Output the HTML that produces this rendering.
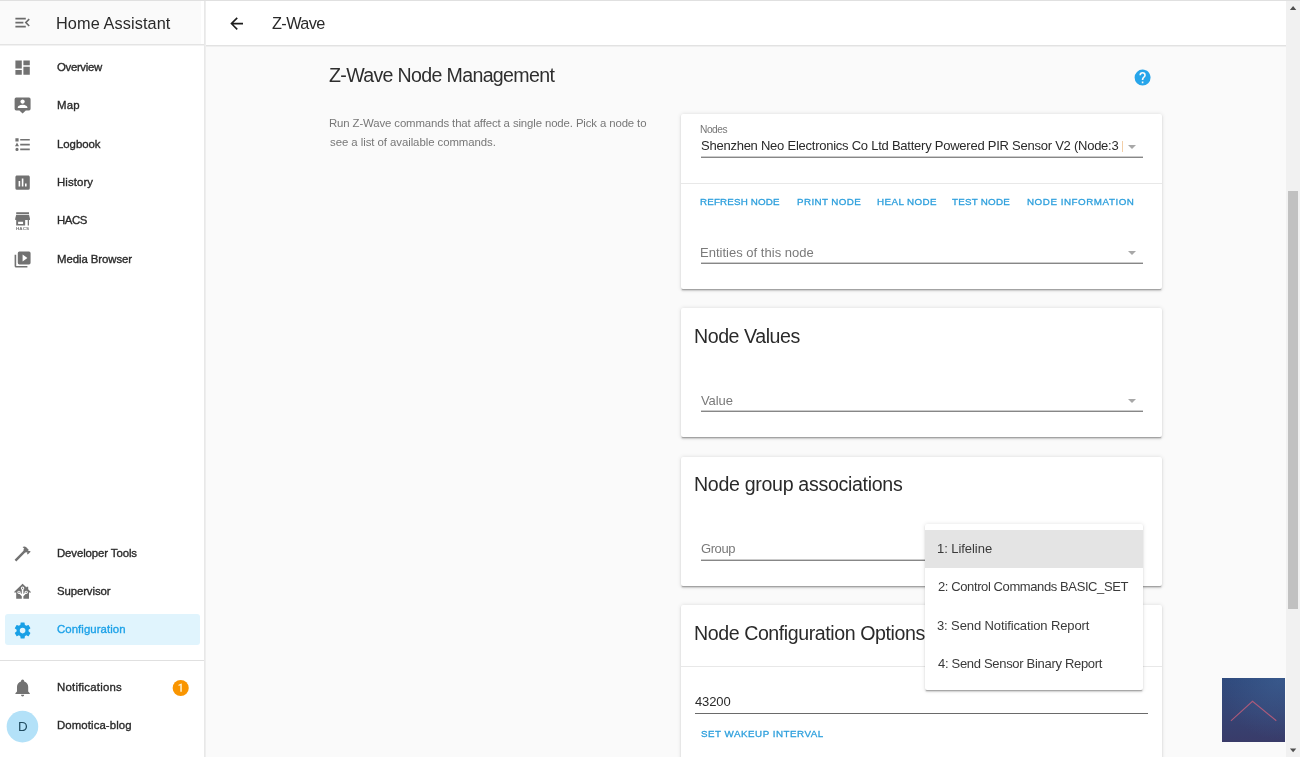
<!DOCTYPE html>
<html>
<head>
<meta charset="utf-8">
<title>Z-Wave</title>
<style>
*{box-sizing:border-box;margin:0;padding:0}
html,body{width:1300px;height:757px;overflow:hidden;background:#fafafa;font-family:"Liberation Sans",sans-serif;color:#212121}
.abs{position:absolute}
.t{position:absolute;white-space:nowrap;z-index:1;will-change:transform}
#topline{left:0;top:0;width:1300px;height:1px;background:#e0e0e0;z-index:50}
/* sidebar */
#sidebar{left:0;top:0;width:206px;height:757px;background:#fff;border-right:1px solid #eeeeee}
#sbline{left:204px;top:0;width:1px;height:757px;background:#e8e8e8}
#sbhead{left:0;top:0;width:201px;height:44px;background:#fafafa}
#sbheadline{left:0;top:44px;width:204px;height:2px;background:linear-gradient(#e4e4e4 50%,#f2f2f2 50%)}
#sbtitle{left:57px;top:13px;font-size:16px;line-height:20px;color:#212121;white-space:nowrap}
.ic{position:absolute;width:19.2px;height:19.2px;fill:#727272;will-change:transform}
.sbi{position:absolute;left:57.5px;font-size:11.2px;line-height:14px;color:#212121;white-space:nowrap;-webkit-text-stroke:0.3px #212121}
#sel{left:5px;top:614px;width:195px;height:31px;background:#e0f4fd;border-radius:3px}
#sbdiv{left:0;top:660px;width:204px;height:1px;background:#e0e0e0}
#badge{left:172px;top:679px;width:16px;height:16px;border-radius:50%;background:#ff9800;color:#fff;font-size:9px;line-height:16px;text-align:center;font-weight:bold}
#avatar{left:6.5px;top:709.5px;width:32px;height:32px;border-radius:50%;background:#b3e5fc;color:#212121;font-size:12.8px;line-height:32px;text-align:center}
/* top bar */
#topbar{left:205px;top:0;width:1081px;height:45px;background:#fff}
#topbarline{left:205px;top:45px;width:1081px;height:2px;background:linear-gradient(#e2e2e2 50%,#efefef 50%)}
#tbtitle{left:272px;top:13px;font-size:16px;line-height:20px;white-space:nowrap}
/* content */
#h1{left:330px;top:64px;font-size:19.2px;line-height:24px;white-space:nowrap;color:#212121}
#desc{left:330px;top:113.5px;font-size:11.2px;line-height:19.2px;color:#727272;white-space:nowrap}
.card{position:absolute;left:681px;width:481px;background:#fff;border-radius:2px;box-shadow:0 1.6px 1.6px 0 rgba(0,0,0,.14),0 0.8px 4px 0 rgba(0,0,0,.12),0 2.4px 0.8px -1.6px rgba(0,0,0,.2)}
.ch{position:absolute;left:695px;font-size:19.2px;line-height:24px;white-space:nowrap;color:#212121}
.lbl{position:absolute;left:701px;font-size:12.8px;line-height:16px;color:#737373;white-space:nowrap}
.ul{position:absolute;left:701px;width:442px;height:2px;background:linear-gradient(#cccccc 50%,#878787 50%)}
.dd{position:absolute;left:1128px;width:0;height:0;border-left:4px solid transparent;border-right:4px solid transparent;border-top:4px solid #a8a8a8}
.hr{position:absolute;left:681px;width:481px;height:1px;background:#e8e8e8}
.btn{position:absolute;font-size:9.6px;line-height:12px;color:#2b9fdb;letter-spacing:.9px;white-space:nowrap;-webkit-text-stroke:0.3px #2b9fdb}
/* dropdown */
#menu{left:925px;top:524px;width:218px;height:166px;background:#fff;border-radius:2px;box-shadow:0 1.6px 1.6px 0 rgba(0,0,0,.14),0 0.8px 4px 0 rgba(0,0,0,.12),0 2.4px 0.8px -1.6px rgba(0,0,0,.2);z-index:10}
#menusel{left:925px;top:530px;width:218px;height:38px;background:#e4e4e4;z-index:11}
.mi{position:absolute;left:938px;font-size:12.8px;line-height:16px;color:#3a3a3a;white-space:nowrap;z-index:12}
/* scrollbar */
#sbtrack{left:1286px;top:0;width:14px;height:757px;background:#f1f1f1}
#sbthumb{left:1288px;top:191px;width:10px;height:418px;background:#c1c1c1}
#bluebox{left:1222px;top:678px;width:63px;height:64px;background:radial-gradient(circle at 90% 5%,rgba(66,104,155,.45),rgba(66,104,155,0) 70%),linear-gradient(180deg,#2f4a7d 0%,#354575 50%,#393b69 100%);z-index:20}
</style>
</head>
<body>
<!-- main content -->
<div class="abs" id="topbar"></div>
<div class="abs" id="topbarline"></div>
<svg class="ic" style="left:227.1px;top:13.8px;fill:#1c1c1c" viewBox="0 0 24 24"><path d="M20,11V13H8L13.5,18.5L12.08,19.92L4.16,12L12.08,4.08L13.5,5.5L8,11H20Z"/></svg>

<svg class="ic" style="left:1132.6px;top:68.2px;fill:#27a5ea" viewBox="0 0 24 24"><path d="M15.07,11.25L14.17,12.17C13.45,12.89 13,13.5 13,15H11V14.5C11,13.39 11.45,12.39 12.17,11.67L13.41,10.41C13.78,10.05 14,9.55 14,9C14,7.89 13.1,7 12,7A2,2 0 0,0 10,9H8A4,4 0 0,1 12,5A4,4 0 0,1 16,9C16,9.88 15.64,10.67 15.07,11.25M13,19H11V17H13M12,2A10,10 0 0,0 2,12A10,10 0 0,0 12,22A10,10 0 0,0 22,12C22,6.47 17.5,2 12,2Z"/></svg>

<!-- card 1 -->
<div class="card" style="top:114px;height:175px"></div>
<div class="ul" style="top:156px"></div>
<div class="dd" style="top:145px"></div>
<div class="abs" style="left:1122px;top:140.5px;width:1px;height:11px;background:#f3cfa8"></div>
<div class="hr" style="top:183px"></div>
<div class="ul" style="top:262px"></div>
<div class="dd" style="top:251px"></div>

<!-- card 2 -->
<div class="card" style="top:308px;height:129px"></div>
<div class="ul" style="top:410px"></div>
<div class="dd" style="top:399px"></div>

<!-- card 3 -->
<div class="card" style="top:457px;height:129px"></div>
<div class="ul" style="top:559px"></div>

<!-- card 4 -->
<div class="card" style="top:605px;height:170px"></div>
<div class="hr" style="top:666px"></div>
<div class="abs" style="left:695px;top:713px;width:453px;height:1px;background:#6a6a6a"></div>

<!-- dropdown menu -->
<div class="abs" id="menu"></div>
<div class="abs" id="menusel"></div>

<!-- blue box -->
<div class="abs" id="bluebox"><svg width="64" height="64" viewBox="0 0 64 64" style="position:absolute;left:0;top:0"><path d="M8.9 42.9 L30.5 23.3 L54.3 42.7" fill="none" stroke="#b85c7a" stroke-width="1.1" stroke-opacity=".9"/></svg></div>

<!-- scrollbar -->
<div class="abs" id="sbtrack"></div>
<div class="abs" id="sbthumb"></div>
<svg class="abs" style="left:1286px;top:0" width="14" height="757"><path d="M3.9,10L7.1,6L10.3,10Z M3.9,748.6L7.1,752.2L10.3,748.6Z" fill="#505050"/></svg>

<!-- sidebar -->
<div class="abs" id="sidebar"></div>
<div class="abs" id="sbhead"></div>
<div class="abs" id="sbheadline"></div>
<div class="abs" id="sbline"></div>
<svg class="ic" style="left:12.9px;top:13.4px;fill:#6b6b6b" viewBox="0 0 24 24"><path d="M21,15.61L19.59,17L14.58,12L19.59,7L21,8.39L17.44,12L21,15.61M3,6H16V8H3V6M3,13V11H13V13H3M3,18V16H16V18H3Z"/></svg>

<div class="abs" id="sel"></div>
<div class="abs" id="sbdiv"></div>
<svg class="ic" style="left:12.9px;top:58.3px" viewBox="0 0 24 24"><path d="M13,3V9H21V3M13,21H21V11H13M3,21H11V15H3M3,13H11V3H3V13Z"/></svg>
<svg class="ic" style="left:12.9px;top:96.3px" viewBox="0 0 24 24"><path d="M20,2H4A2,2 0 0,0 2,4V16A2,2 0 0,0 4,18H8L12,22L16,18H20A2,2 0 0,0 22,16V4A2,2 0 0,0 20,2M12,4.3C13.5,4.3 14.7,5.5 14.7,7C14.7,8.5 13.5,9.7 12,9.7C10.5,9.7 9.3,8.5 9.3,7C9.3,5.5 10.5,4.3 12,4.3M18,15H6V14.1C6,12.1 10,11 12,11C14,11 18,12.1 18,14.1V15Z"/></svg>
<svg class="ic" style="left:12.9px;top:134.7px" viewBox="0 0 24 24"><path d="M5,9.5L7.5,14H2.5L5,9.5M3,4H7V8H3V4M5,20A2,2 0 0,0 7,18A2,2 0 0,0 5,16A2,2 0 0,0 3,18A2,2 0 0,0 5,20M9,5V7H21V5H9M9,19H21V17H9V19M9,13H21V11H9V13Z"/></svg>
<svg class="ic" style="left:12.9px;top:173.1px" viewBox="0 0 24 24"><path d="M17,17H15V13H17M13,17H11V7H13M9,17H7V10H9M19,3H5C3.89,3 3,3.89 3,5V19A2,2 0 0,0 5,21H19A2,2 0 0,0 21,19V5C21,3.89 20.1,3 19,3Z"/></svg>
<svg class="ic" style="left:12.9px;top:211px" viewBox="0 0 24 24"><path fill-rule="evenodd" d="M4,1.5H20V3.6H4ZM4,4.7H20L21.2,9.4V11.3H20V18H18.4V11.3H15.2V18H4V11.3H2.8V9.4ZM6.4,13.6V16.4H12.6V13.6Z"/><text x="3.8" y="23.6" font-size="5" font-family="Liberation Sans, sans-serif" font-weight="bold" textLength="16.2" lengthAdjust="spacingAndGlyphs">HACS</text></svg>
<svg class="ic" style="left:12.9px;top:249.9px" viewBox="0 0 24 24"><path d="M4,6H2V20A2,2 0 0,0 4,22H18V20H4V6M20,2H8A2,2 0 0,0 6,4V16A2,2 0 0,0 8,18H20A2,2 0 0,0 22,16V4A2,2 0 0,0 20,2M12,14.5V5.5L18,10L12,14.5Z"/></svg>
<svg class="ic" style="left:12.9px;top:543.9px" viewBox="0 0 24 24"><path d="M2,19.63L13.43,8.2L12.72,7.5L14.14,6.07L12,3.89C13.2,2.7 15.09,2.7 16.27,3.89L19.87,7.5L18.45,8.91H21.29L22,9.62L18.45,13.21L17.74,12.5V9.62L16.27,11.04L15.56,10.33L4.13,21.76L2,19.63Z"/></svg>
<svg class="ic" style="left:12.9px;top:582px" viewBox="0 0 24 24"><path d="M21.8,13H20V21H13V17.67L15.79,14.88L16.5,15C17.66,15 18.6,14.06 18.6,12.9C18.6,11.74 17.66,10.8 16.5,10.8A2.1,2.1 0 0,0 14.4,12.9L14.5,13.61L13,15.13V9.65C13.66,9.29 14.1,8.6 14.1,7.8A2.1,2.1 0 0,0 12,5.7A2.1,2.1 0 0,0 9.9,7.8C9.9,8.6 10.34,9.29 11,9.65V15.13L9.5,13.61L9.6,12.9A2.1,2.1 0 0,0 7.5,10.8A2.1,2.1 0 0,0 5.4,12.9A2.1,2.1 0 0,0 7.5,15L8.21,14.88L11,17.67V21H4V13H2.25C1.83,13 1.42,13 1.42,12.79C1.43,12.57 1.85,12.15 2.28,11.72L11,3C11.33,2.67 11.67,2.33 12,2.33C12.33,2.33 12.67,2.67 13,3L17,7V6H19V9L21.78,11.78C22.18,12.18 22.59,12.59 22.6,12.8C22.6,13 22.2,13 21.8,13M7.5,12A0.9,0.9 0 0,1 8.4,12.9A0.9,0.9 0 0,1 7.5,13.8A0.9,0.9 0 0,1 6.6,12.9A0.9,0.9 0 0,1 7.5,12M16.5,12C17,12 17.4,12.4 17.4,12.9C17.4,13.4 17,13.8 16.5,13.8A0.9,0.9 0 0,1 15.6,12.9A0.9,0.9 0 0,1 16.5,12M12,6.9C12.5,6.9 12.9,7.3 12.9,7.8C12.9,8.3 12.5,8.7 12,8.7C11.5,8.7 11.1,8.3 11.1,7.8C11.1,7.3 11.5,6.9 12,6.9Z"/></svg>
<svg class="ic" style="left:12.9px;top:620.8px;fill:#18a0e6" viewBox="0 0 24 24"><path d="M12,15.5A3.5,3.5 0 0,1 8.5,12A3.5,3.5 0 0,1 12,8.5A3.5,3.5 0 0,1 15.5,12A3.5,3.5 0 0,1 12,15.5M19.43,12.97C19.47,12.65 19.5,12.33 19.5,12C19.5,11.67 19.47,11.34 19.43,11L21.54,9.37C21.73,9.22 21.78,8.95 21.66,8.73L19.66,5.27C19.54,5.05 19.27,4.96 19.05,5.05L16.56,6.05C16.04,5.66 15.5,5.32 14.87,5.07L14.5,2.42C14.46,2.18 14.25,2 14,2H10C9.75,2 9.54,2.18 9.5,2.42L9.13,5.07C8.5,5.32 7.96,5.66 7.44,6.05L4.95,5.05C4.73,4.96 4.46,5.05 4.34,5.27L2.34,8.73C2.21,8.95 2.27,9.22 2.46,9.37L4.57,11C4.53,11.34 4.5,11.67 4.5,12C4.5,12.33 4.53,12.65 4.57,12.97L2.46,14.63C2.27,14.78 2.21,15.05 2.34,15.27L4.34,18.73C4.46,18.95 4.73,19.03 4.95,18.95L7.44,17.94C7.96,18.34 8.5,18.68 9.13,18.93L9.5,21.58C9.54,21.82 9.75,22 10,22H14C14.25,22 14.46,21.82 14.5,21.58L14.87,18.93C15.5,18.67 16.04,18.34 16.56,17.94L19.05,18.95C19.27,19.03 19.54,18.95 19.66,18.73L21.66,15.27C21.78,15.05 21.73,14.78 21.54,14.63L19.43,12.97Z"/></svg>
<svg class="ic" style="left:12.9px;top:678.3px" viewBox="0 0 24 24"><path d="M21,19V20H3V19L5,17V11C5,7.9 7.03,5.17 10,4.29C10,4.19 10,4.1 10,4A2,2 0 0,1 12,2A2,2 0 0,1 14,4C14,4.1 14,4.19 14,4.29C16.97,5.17 19,7.9 19,11V17L21,19M14,21A2,2 0 0,1 12,23A2,2 0 0,1 10,21"/></svg>
<svg class="abs" style="left:0;top:670px" width="205" height="87" viewBox="0 670 205 87"><circle cx="22.45" cy="726.6" r="15.8" fill="#b3e1f8"/><circle cx="180.7" cy="688.05" r="8.05" fill="#f99500"/><path d="M181.75,683.5V691.8H180.35V685.25L178.55,685.95V684.7L181.5,683.5Z" fill="#fff6dc"/></svg>

<div class="t" id="sbtitle" style="left:56.35px;top:14px;font-size:16.3px;line-height:18px;color:#2a2a2a;letter-spacing:0.097px">Home Assistant</div>
<div class="t" id="tbtitle" style="left:271.55px;top:14px;font-size:16.3px;line-height:18px;color:#2a2a2a;letter-spacing:-0.594px">Z-Wave</div>
<div class="t" id="s1" style="left:57.07px;top:61px;font-size:11.4px;line-height:12px;color:#2b2b2b;letter-spacing:-0.334px;-webkit-text-stroke:0.35px #2b2b2b">Overview</div>
<div class="t" id="s2" style="left:56.85px;top:99px;font-size:11.4px;line-height:12px;color:#2b2b2b;letter-spacing:0.180px;-webkit-text-stroke:0.35px #2b2b2b">Map</div>
<div class="t" id="s3" style="left:56.85px;top:138px;font-size:11.4px;line-height:12px;color:#2b2b2b;letter-spacing:-0.030px;-webkit-text-stroke:0.35px #2b2b2b">Logbook</div>
<div class="t" id="s4" style="left:56.85px;top:176px;font-size:11.4px;line-height:12px;color:#2b2b2b;letter-spacing:0.097px;-webkit-text-stroke:0.35px #2b2b2b">History</div>
<div class="t" id="s5" style="left:56.85px;top:214px;font-size:11.4px;line-height:12px;color:#2b2b2b;letter-spacing:-0.465px;-webkit-text-stroke:0.35px #2b2b2b">HACS</div>
<div class="t" id="s6" style="left:56.85px;top:253px;font-size:11.4px;line-height:12px;color:#2b2b2b;letter-spacing:-0.075px;-webkit-text-stroke:0.35px #2b2b2b">Media Browser</div>
<div class="t" id="s7" style="left:56.85px;top:547px;font-size:11.4px;line-height:12px;color:#2b2b2b;letter-spacing:-0.103px;-webkit-text-stroke:0.35px #2b2b2b">Developer Tools</div>
<div class="t" id="s8" style="left:57.07px;top:585px;font-size:11.4px;line-height:12px;color:#2b2b2b;letter-spacing:-0.105px;-webkit-text-stroke:0.35px #2b2b2b">Supervisor</div>
<div class="t" id="s9" style="left:57.07px;top:623px;font-size:11.4px;line-height:12px;color:#1ea2e8;letter-spacing:0.060px;-webkit-text-stroke:0.35px #1ea2e8">Configuration</div>
<div class="t" id="s10" style="left:56.85px;top:681px;font-size:11.4px;line-height:12px;color:#2b2b2b;letter-spacing:0.221px;-webkit-text-stroke:0.35px #2b2b2b">Notifications</div>
<div class="t" id="s11" style="left:56.85px;top:719px;font-size:11.4px;line-height:12px;color:#2b2b2b;letter-spacing:0.094px;-webkit-text-stroke:0.35px #2b2b2b">Domotica-blog</div>
<div class="t" id="av" style="left:17.76px;top:719px;font-size:13.4px;line-height:15px;color:#1f4a5e;letter-spacing:0.000px">D</div>
<div class="t" id="h1" style="left:329.34px;top:64px;font-size:19.6px;line-height:22px;color:#2e2e2e;letter-spacing:-0.671px">Z-Wave Node Management</div>
<div class="t" id="d1" style="left:329.12px;top:117px;font-size:11.4px;line-height:12px;color:#777;letter-spacing:-0.122px">Run Z-Wave commands that affect a single node. Pick a node to</div>
<div class="t" id="d2" style="left:329.57px;top:136px;font-size:11.4px;line-height:12px;color:#777;letter-spacing:-0.058px">see a list of available commands.</div>
<div class="t" id="nl" style="left:700.13px;top:124px;font-size:10.2px;line-height:11px;color:#777;letter-spacing:-0.472px">Nodes</div>
<div class="t" id="nv" style="left:701.03px;top:138px;font-size:13.0px;line-height:15px;color:#2a2a2a;letter-spacing:-0.244px">Shenzhen Neo Electronics Co Ltd Battery Powered PIR Sensor V2 (Node:3</div>
<div class="t" id="b1" style="left:700.35px;top:196px;font-size:9.8px;line-height:11px;color:#2d9fdc;letter-spacing:0.151px;-webkit-text-stroke:0.3px #2d9fdc">REFRESH NODE</div>
<div class="t" id="b2" style="left:796.54px;top:196px;font-size:9.8px;line-height:11px;color:#2d9fdc;letter-spacing:0.405px;-webkit-text-stroke:0.3px #2d9fdc">PRINT NODE</div>
<div class="t" id="b3" style="left:876.53px;top:196px;font-size:9.8px;line-height:11px;color:#2d9fdc;letter-spacing:0.422px;-webkit-text-stroke:0.3px #2d9fdc">HEAL NODE</div>
<div class="t" id="b4" style="left:952.29px;top:196px;font-size:9.8px;line-height:11px;color:#2d9fdc;letter-spacing:0.242px;-webkit-text-stroke:0.3px #2d9fdc">TEST NODE</div>
<div class="t" id="b5" style="left:1026.54px;top:196px;font-size:9.8px;line-height:11px;color:#2d9fdc;letter-spacing:0.537px;-webkit-text-stroke:0.3px #2d9fdc">NODE INFORMATION</div>
<div class="t" id="l1" style="left:700.09px;top:245px;font-size:13.0px;line-height:15px;color:#7a7a7a;letter-spacing:0.014px">Entities of this node</div>
<div class="t" id="c2" style="left:694.13px;top:325px;font-size:19.6px;line-height:22px;color:#2a2a2a;letter-spacing:-0.445px">Node Values</div>
<div class="t" id="l2" style="left:700.99px;top:393px;font-size:13.0px;line-height:15px;color:#7a7a7a;letter-spacing:-0.090px">Value</div>
<div class="t" id="c3" style="left:694.13px;top:473px;font-size:19.6px;line-height:22px;color:#2a2a2a;letter-spacing:-0.317px">Node group associations</div>
<div class="t" id="l3" style="left:700.54px;top:541px;font-size:13.0px;line-height:15px;color:#7a7a7a;letter-spacing:-0.416px">Group</div>
<div class="t" id="c4" style="left:694.13px;top:622px;font-size:19.6px;line-height:22px;color:#2a2a2a;letter-spacing:-0.423px">Node Configuration Options</div>
<div class="t" id="v4" style="left:694.77px;top:694px;font-size:13.0px;line-height:15px;color:#2a2a2a;letter-spacing:-0.113px">43200</div>
<div class="t" id="b6" style="left:700.76px;top:728px;font-size:9.8px;line-height:11px;color:#2d9fdc;letter-spacing:0.498px;-webkit-text-stroke:0.3px #2d9fdc">SET WAKEUP INTERVAL</div>
<div class="t" id="m1" style="left:936.90px;top:541px;font-size:13.0px;line-height:15px;color:#3a3a3a;letter-spacing:-0.054px;z-index:12">1: Lifeline</div>
<div class="t" id="m2" style="left:938.12px;top:579px;font-size:13.0px;line-height:15px;color:#3a3a3a;letter-spacing:-0.398px;z-index:12">2: Control Commands BASIC_SET</div>
<div class="t" id="m3" style="left:937.35px;top:618px;font-size:13.0px;line-height:15px;color:#3a3a3a;letter-spacing:-0.114px;z-index:12">3: Send Notification Report</div>
<div class="t" id="m4" style="left:938.34px;top:656px;font-size:13.0px;line-height:15px;color:#3a3a3a;letter-spacing:-0.308px;z-index:12">4: Send Sensor Binary Report</div>
<div class="abs" id="topline"></div>
</body>
</html>
